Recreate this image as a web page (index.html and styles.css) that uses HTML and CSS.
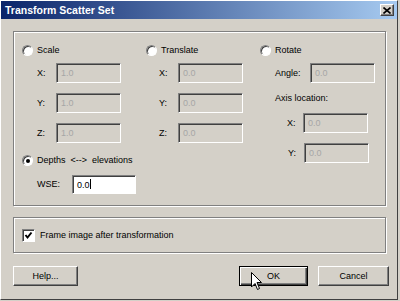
FILE: index.html
```html
<!DOCTYPE html>
<html lang="en">
<head>
    <meta charset="UTF-8">
    <title>Transform Scatter Set</title>
    <link rel="stylesheet" href="styles.css">
</head>
<body>
    <div class="window">
        <div class="titlebar">
            <span class="title">Transform Scatter Set</span>
            <span class="close">
                <svg width="8" height="7" viewBox="0 0 8 7"><path d="M0.5 0.5 L7.5 6.5 M7.5 0.5 L0.5 6.5" stroke="#000" stroke-width="1.6"/></svg>
            </span>
        </div>
        <div class="content">
            <div class="group g1">
                <div class="left">
                    <div class="cols">
                        <div class="c1">
                            <div class="radio-row"><span class="radio"></span>Scale</div>
                            <div class="row first"><span class="lbl">X:</span><span class="field">1.0</span></div>
                            <div class="row"><span class="lbl">Y:</span><span class="field">1.0</span></div>
                            <div class="row"><span class="lbl">Z:</span><span class="field">1.0</span></div>
                        </div>
                        <div class="c2">
                            <div class="radio-row"><span class="radio"></span>Translate</div>
                            <div class="row first"><span class="lbl">X:</span><span class="field">0.0</span></div>
                            <div class="row"><span class="lbl">Y:</span><span class="field">0.0</span></div>
                            <div class="row"><span class="lbl">Z:</span><span class="field">0.0</span></div>
                        </div>
                    </div>
                    <div class="depths">
                        <div class="radio-row"><span class="radio on"></span>Depths &nbsp;&lt;--&gt;&nbsp; elevations</div>
                        <div class="row wse"><span class="lbl">WSE:</span><span class="field active">0.0<span class="caret"></span></span></div>
                    </div>
                </div>
                <div class="c3">
                    <div class="radio-row"><span class="radio"></span>Rotate</div>
                    <div class="row first angle"><span class="lbl">Angle:</span><span class="field">0.0</span></div>
                    <div class="axis">Axis location:</div>
                    <div class="row axis-x"><span class="lbl">X:</span><span class="field">0.0</span></div>
                    <div class="row axis-y"><span class="lbl">Y:</span><span class="field">0.0</span></div>
                </div>
            </div>
            <div class="group g2">
                <span class="check">
                    <svg width="9" height="9" viewBox="0 0 9 9"><path d="M1.5 4 L3.5 6.5 L7.5 1.5" fill="none" stroke="#000" stroke-width="2"/></svg>
                </span>
                Frame image after transformation
            </div>
            <div class="buttons">
                <div class="btn help">Help...</div>
                <div class="btn ok">OK</div>
                <div class="btn cancel">Cancel</div>
            </div>
        </div>
        <svg class="cursor" width="12" height="19" viewBox="0 0 12 19">
            <path d="M0.5 0.5 L0.5 15 L4 11.5 L6.5 17.5 L8.5 16.5 L6 10.5 L10.5 10.5 Z" fill="#fff" stroke="#000" stroke-width="1"/>
        </svg>
    </div>
</body>
</html>
```

FILE: styles.css
```css
body {
    margin: 0;
    background: #d4d0c8;
    font-family: "Liberation Sans", Arial, sans-serif;
    font-size: 9px;
    color: #000;
}
.window {
    position: relative;
    width: 398px;
    height: 300px;
    box-sizing: border-box;
    border-top: 1px solid #fff;
    border-left: 1px solid #fff;
    border-right: 1px solid #404040;
    border-bottom: 1px solid #404040;
    background: #d4d0c8;
}
.titlebar {
    height: 18px;
    background: linear-gradient(to right, #0a246a, #a6caf0);
    display: flex;
    align-items: center;
    justify-content: space-between;
    padding: 0 3px 0 4px;
}
.title {
    color: #fff;
    font-weight: bold;
    font-size: 10.5px;
}
.close {
    width: 14px;
    height: 12px;
    box-sizing: border-box;
    background: #d4d0c8;
    border: 1px solid;
    border-color: #fff #404040 #404040 #fff;
    box-shadow: inset -1px -1px #808080;
    display: flex;
    align-items: center;
    justify-content: center;
}
.content {
    padding: 12px 0 0 12px;
}
.group {
    width: 373px;
    box-sizing: border-box;
    border: 1px solid #808080;
    box-shadow: inset 1px 1px #fff, 1px 1px #fff;
}
.g1 {
    height: 175px;
    padding: 11px 0 0 8px;
    display: flex;
}
.left {
    width: 238px;
}
.cols {
    display: flex;
}
.c1 {
    width: 124px;
}
.c2 {
    width: 114px;
}
.radio-row {
    height: 14px;
    display: flex;
    align-items: center;
    gap: 4px;
}
.radio {
    width: 11px;
    height: 11px;
    box-sizing: border-box;
    border-radius: 50%;
    background: #fff;
    border: 1px solid;
    border-color: #808080 #fff #fff #808080;
    box-shadow: inset 1px 1px #404040;
    position: relative;
}
.radio.on::after {
    content: "";
    position: absolute;
    left: 3px;
    top: 3px;
    width: 4px;
    height: 4px;
    border-radius: 50%;
    background: #000;
}
.row {
    display: flex;
    align-items: center;
    height: 20px;
    margin-top: 10px;
    padding-left: 15px;
}
.row.first {
    margin-top: 6px;
}
.c2 .row {
    padding-left: 13px;
}
.lbl {
    width: 19px;
}
.field {
    width: 65px;
    height: 20px;
    box-sizing: border-box;
    border: 1px solid;
    border-color: #808080 #fff #fff #808080;
    box-shadow: inset 1px 1px #404040;
    padding: 4px 0 0 4px;
    color: #a6a6a6;
    display: flex;
    align-items: flex-start;
}
.field.active {
    background: #fff;
    color: #000;
    width: 64px;
    height: 19px;
}
.caret {
    width: 1px;
    height: 10px;
    background: #000;
    margin-top: -1px;
}
.depths {
    margin-top: 10px;
}
.wse {
    margin-top: 7px;
}
.wse .lbl {
    width: 35px;
}
.angle .lbl {
    width: 35px;
}
.axis {
    margin-top: 8px;
    height: 14px;
    padding-left: 15px;
    display: flex;
    align-items: center;
}
.axis-x {
    margin-top: 8px;
    padding-left: 27px;
}
.axis-y {
    padding-left: 28px;
}
.axis-x .lbl,
.axis-y .lbl {
    width: 16px;
}
.g2 {
    margin-top: 11px;
    height: 36px;
    padding-left: 8px;
    display: flex;
    align-items: center;
    gap: 5px;
}
.check {
    width: 13px;
    height: 13px;
    box-sizing: border-box;
    background: #fff;
    border: 1px solid;
    border-color: #808080 #fff #fff #808080;
    box-shadow: inset 1px 1px #404040;
    display: flex;
    align-items: center;
    justify-content: center;
}
.buttons {
    margin-top: 13px;
    width: 376px;
    display: flex;
}
.btn {
    height: 20px;
    box-sizing: border-box;
    border: 1px solid;
    border-color: #fff #404040 #404040 #fff;
    box-shadow: inset -1px -1px #808080;
    display: flex;
    align-items: center;
    justify-content: center;
}
.help {
    width: 65px;
}
.ok {
    width: 69px;
    margin-left: auto;
    border-color: #000;
    box-shadow: inset 1px 1px #fff, inset -1px -1px #404040, inset -2px -2px #808080;
}
.cancel {
    width: 71px;
    margin-left: 10px;
}
.cursor {
    position: absolute;
    left: 250px;
    top: 271px;
}
```
